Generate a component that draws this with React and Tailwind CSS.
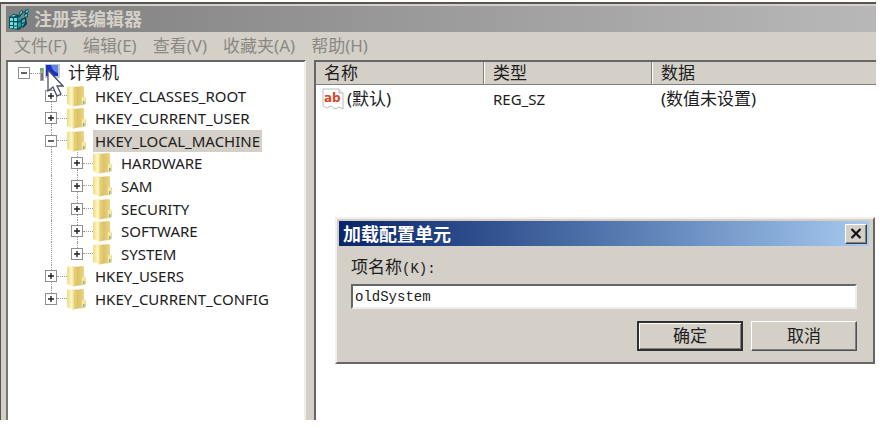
import { useState } from "react";
import clsx from "clsx";

const MENU_ITEMS = ["文件(F)", "编辑(E)", "查看(V)", "收藏夹(A)", "帮助(H)"];

const TREE = [
  { name: "HKEY_CLASSES_ROOT", level: 1 },
  { name: "HKEY_CURRENT_USER", level: 1 },
  { name: "HKEY_LOCAL_MACHINE", level: 1, open: true },
  { name: "HARDWARE", level: 2 },
  { name: "SAM", level: 2 },
  { name: "SECURITY", level: 2 },
  { name: "SOFTWARE", level: 2 },
  { name: "SYSTEM", level: 2, last: true },
  { name: "HKEY_USERS", level: 1 },
  { name: "HKEY_CURRENT_CONFIG", level: 1, last: true },
];

const VALUES = [{ name: "(默认)", type: "REG_SZ", data: "(数值未设置)" }];

export default function App() {
  const [selected, setSelected] = useState("HKEY_LOCAL_MACHINE");

  return (
    <div className="relative flex min-h-screen flex-col bg-white pt-[2px] pr-1 pb-2 font-['Noto_Sans','Noto_Sans_CJK_SC',sans-serif] text-[15px] text-[#202020]">
      <main className="flex flex-1 flex-col border-t-2 border-l border-[#555] bg-[#d4d0c8] pt-[2px] pl-[5px]">
        <header className="flex h-[26px] items-center gap-1 bg-linear-to-r from-[#808080] to-[#b8b8b8] pl-[2px]">
          <RegistryIcon />
          <h1 className="text-[18px] leading-5 font-bold text-[#d4d0c8]">注册表编辑器</h1>
        </header>

        <nav className="flex h-7 items-center gap-4 pl-2 text-[#8a8883]">
          {MENU_ITEMS.map((item) => (
            <button key={item} type="button" className="text-[17px] leading-5">
              {item}
            </button>
          ))}
        </nav>

        <div className="flex flex-1">
          <section className="w-[300px] shrink-0 border-t-2 border-r-2 border-l-2 border-t-[#666] border-r-[#efeeea] border-l-[#777] bg-white">
            <ul className="grid h-[248px] auto-rows-fr">
              <li className="flex items-center pl-[10px]">
                <Toggle open />
                <span className="w-[10px] border-t border-dotted border-[#999]" />
                <ComputerIcon />
                <span className="ml-2 text-[17px] leading-5">计算机</span>
              </li>
              {TREE.map((node) => (
                <TreeNode
                  key={node.name}
                  node={node}
                  selected={node.name === selected}
                  onSelect={setSelected}
                />
              ))}
            </ul>
          </section>

          <section className="ml-2 flex-1 border-t-2 border-l-2 border-[#666] bg-white">
            <table className="w-full table-fixed border-collapse text-left">
              <colgroup>
                <col className="w-[168px]" />
                <col className="w-[168px]" />
                <col />
              </colgroup>
              <thead>
                <tr className="h-[22px] bg-[#d4d0c8] text-[17px] leading-5">
                  <th className="border-b border-[#808080] py-0 pl-2 font-normal shadow-[inset_-1px_0_#808080]">名称</th>
                  <th className="border-b border-[#808080] py-0 pl-[9px] font-normal shadow-[inset_1px_0_#fff,inset_-1px_0_#808080]">类型</th>
                  <th className="border-b border-[#808080] py-0 pl-[9px] font-normal shadow-[inset_1px_0_#fff]">数据</th>
                </tr>
              </thead>
              <tbody>
                {VALUES.map((value) => (
                  <tr key={value.name} className="h-[30px]">
                    <td className="py-0 pl-[6px]">
                      <span className="flex items-center gap-[3px] text-[17px] leading-5">
                        <StringValueIcon />
                        {value.name}
                      </span>
                    </td>
                    <td className="py-0 pl-[9px] text-[15px] leading-5">{value.type}</td>
                    <td className="py-0 pl-[9px] text-[17px] leading-5">{value.data}</td>
                  </tr>
                ))}
              </tbody>
            </table>
          </section>
        </div>
      </main>

      <LoadHiveDialog />
      <CursorIcon />
    </div>
  );
}

function TreeNode({ node, selected, onSelect }) {
  return (
    <li className="flex items-center pl-[37px]">
      {node.level === 2 && (
        <span className="mr-[14px] flex w-3 justify-center self-stretch">
          <span className="border-l border-dotted border-[#999]" />
        </span>
      )}
      <span className="flex flex-col items-center self-stretch">
        <span className="flex-1 border-l border-dotted border-[#999]" />
        <Toggle open={node.open} />
        <span className={clsx("flex-1 border-l border-dotted", node.last ? "border-transparent" : "border-[#999]")} />
      </span>
      <span className="w-[10px] border-t border-dotted border-[#999]" />
      <FolderIcon />
      <button
        type="button"
        onClick={() => onSelect(node.name)}
        className={clsx("ml-[6px] px-[2px] leading-[22px]", selected && "bg-[#d4d0c8]")}
      >
        {node.name}
      </button>
    </li>
  );
}

function Toggle({ open = false }) {
  return (
    <button type="button" aria-label={open ? "折叠" : "展开"} className="block size-3 shrink-0">
      <svg viewBox="0 0 12 12" className="size-3">
        <rect x="0.5" y="0.5" width="11" height="11" fill="#fff" stroke="#909090" />
        <path d={open ? "M3 6h6" : "M3 6h6M6 3v6"} stroke="#222" strokeWidth="1.4" />
      </svg>
    </button>
  );
}

function LoadHiveDialog() {
  const [keyName, setKeyName] = useState("oldSystem");

  return (
    <form
      role="dialog"
      aria-labelledby="dialog-title"
      onSubmit={(event) => event.preventDefault()}
      className="absolute top-[217px] right-[5px] w-[540px] border-2 border-t-[#f1f0ec] border-r-[#666] border-b-[#666] border-l-[#f1f0ec] bg-[#d4d0c8] pt-[2px] pr-1 pb-[11px] pl-[2px]"
    >
      <div className="flex h-[25px] items-center justify-between bg-linear-to-r from-[#0a246a] to-[#a6caf0] pr-[2px] pl-1">
        <h2 id="dialog-title" className="text-[18px] leading-5 font-bold text-white">
          加载配置单元
        </h2>
        <button
          type="button"
          aria-label="关闭"
          className="flex h-5 w-[22px] items-center justify-center border border-t-white border-r-[#404040] border-b-[#404040] border-l-white bg-[#d4d0c8] shadow-[inset_-1px_-1px_#808080]"
        >
          <svg viewBox="0 0 12 11" className="h-[11px] w-3">
            <path d="M1.5 1l9 9M10.5 1l-9 9" stroke="#111" strokeWidth="2.2" />
          </svg>
        </button>
      </div>

      <div className="px-3 pt-3">
        <label htmlFor="key-name" className="block font-['Liberation_Mono','Noto_Sans_CJK_SC',monospace] text-[17px] leading-[22px]">
          项名称<span className="text-[14px]">(K):</span>
        </label>
        <input
          id="key-name"
          value={keyName}
          onChange={(event) => setKeyName(event.target.value)}
          className="mt-1 block h-[25px] w-full border-2 border-t-[#666] border-r-[#efeeea] border-b-[#efeeea] border-l-[#666] bg-white px-[2px] font-['Liberation_Mono',monospace] text-[14px] outline-none"
        />
        <div className="mt-3 flex justify-end gap-2 text-[17px] leading-5">
          <button
            type="submit"
            className="h-[30px] w-[106px] border-2 border-[#303030] bg-[#d4d0c8] shadow-[inset_1px_1px_#fff,inset_-1px_-1px_#808080]"
          >
            确定
          </button>
          <button
            type="button"
            className="h-[30px] w-[106px] border border-t-white border-r-[#505050] border-b-[#505050] border-l-white bg-[#d4d0c8] shadow-[inset_-1px_-1px_#808080]"
          >
            取消
          </button>
        </div>
      </div>
    </form>
  );
}

function RegistryIcon() {
  return (
    <svg viewBox="0 0 22 22" className="size-[22px] shrink-0">
      <path d="M1 9l4-3 8 1v14l-3 1-9-2z" fill="#0b4f57" />
      <path d="M2 10h3v3H2zM6 10h3v3H6zM2 14h3v3H2zM6 14.500h3v3H6zM2 18h3v2H2zM6 18.500h3v2H6zM5 7l3 .3-2 1.200-3-.3z" fill="#6fdde2" />
      <path d="M10 10l3-2v4l-3 1zM10 15l3-1v4l-3 2z" fill="#1e9ba5" />
      <path d="M13 11l5-2 1 7-4 4-2-1z" fill="#063f48" />
      <path d="M14 12l3-1v3l-3 1zM14 16l3-1-3 4z" fill="#34b8bf" />
      <path d="M11 4l3-2 2 2-2 3-3-1zM17 2l3-1 1 3-3 2-2-1zM16 6l4-1v4l-3 1z" fill="#0b5961" />
      <path d="M12 4l2-1v2l-2 1zM18 3l2-1v2l-2 1zM17 7l2-1v2l-2 1z" fill="#56ced4" />
    </svg>
  );
}

function ComputerIcon() {
  return (
    <svg viewBox="0 0 20 20" className="size-5 shrink-0">
      <path d="M0 5h4v13H0z" fill="#aaa" />
      <path d="M0 5h3v3H0z" fill="#62bd55" />
      <path d="M1 10h2v7H1z" fill="#777" />
      <path d="M5 1h15v14H5z" fill="#c5c8d1" />
      <path d="M6 2h12v11H6z" fill="#1733c5" />
      <path d="M11 2h7v8c-4-1-6-4-7-8z" fill="#6484e5" />
      <path d="M8 15h8v2H8z" fill="#a6a6a6" />
    </svg>
  );
}

function FolderIcon() {
  return (
    <svg viewBox="0 0 20 22" className="h-[22px] w-5 shrink-0">
      <defs>
        <linearGradient id="folder-front" x1="0" x2="1">
          <stop offset="0" stopColor="#ecdc86" />
          <stop offset="0.5" stopColor="#fff6c0" />
          <stop offset="1" stopColor="#dfc468" />
        </linearGradient>
        <linearGradient id="folder-back" x1="0" x2="1">
          <stop offset="0" stopColor="#d3b65c" />
          <stop offset="1" stopColor="#f0dc88" />
        </linearGradient>
      </defs>
      <path d="M7 2l9-1 1 1v9l2 2v6l-2 1-10 1z" fill="url(#folder-back)" />
      <path d="M0 2l6-1 3 2v16l-2 3-7-3z" fill="url(#folder-front)" />
      <path d="M7 4v17l3-3V3z" fill="#e3cd74" />
      <path d="M15 12h3v7h-3z" fill="#f6eaaa" />
      <path d="M16 16h1.500v3H16z" fill="#6fb7b2" />
    </svg>
  );
}

function StringValueIcon() {
  return (
    <svg viewBox="0 0 22 22" className="size-[22px] shrink-0">
      <path d="M1 1h16l4 4v16l-4-2-4 2-4-3-4 2-4-2z" fill="#fff" stroke="#bbb" />
      <path d="M17 1v4h4" fill="#eee" stroke="#bbb" />
      <text x="2" y="14" fontFamily="DejaVu Sans" fontSize="12" fontWeight="bold" fill="#d34825">
        ab
      </text>
    </svg>
  );
}

function CursorIcon() {
  return (
    <svg viewBox="0 0 17 28" className="pointer-events-none absolute top-[69px] left-[47px] h-7 w-[17px]">
      <path d="M1 1v21l5-4 4 9 4-2-4-8h6z" fill="#fff" stroke="#4a5068" strokeWidth="1.300" />
    </svg>
  );
}
